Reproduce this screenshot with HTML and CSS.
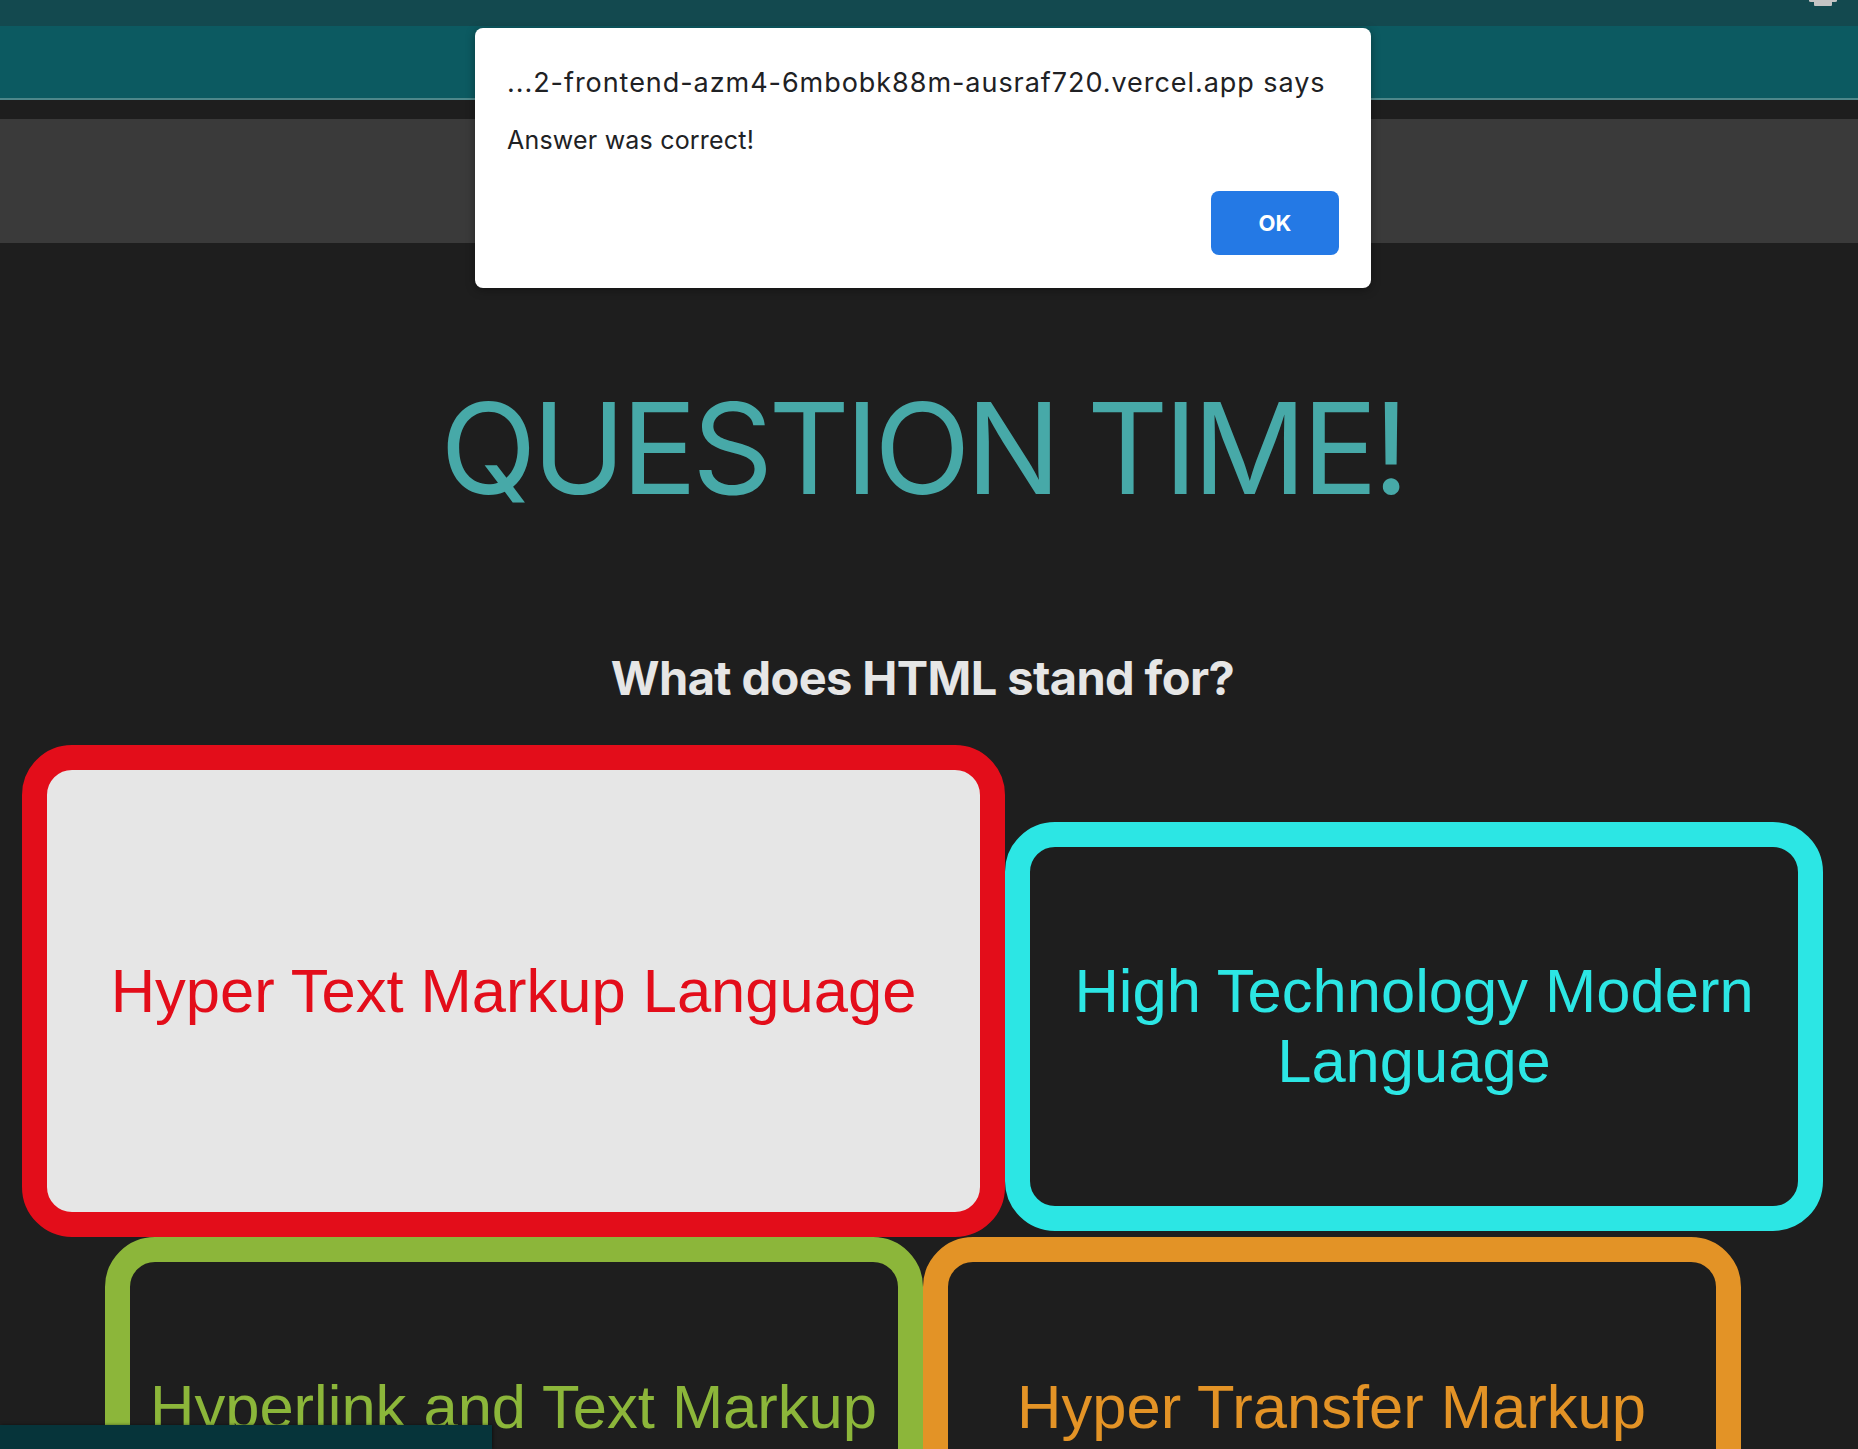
FILE: index.html
```html
<!DOCTYPE html>
<html lang="en">
<head>
<meta charset="utf-8">
<title>Question Time</title>
<link rel="stylesheet" href="styles.css">
</head>
<body>
  <div class="topbar">
    <svg class="topbar-icon" width="28" height="6" viewBox="0 0 28 6" aria-hidden="true">
      <path d="M0 0 H28 V1 Q28 2 26 2 H23 V5 Q23 6 22 6 H6 Q5 6 5 5 V2 H2 Q0 2 0 1 Z" fill="#c4c4c4"/>
    </svg>
  </div>
  <header class="nav"></header>
  <div class="subbar"></div>

  <main class="quiz">
    <h1 class="quiz-title">QUESTION TIME!</h1>
    <h2 class="quiz-question">What does HTML stand for?</h2>
    <div class="answers">
      <div class="answer answer-red is-selected">Hyper Text Markup Language</div>
      <div class="answer answer-cyan">High Technology Modern Language</div>
      <div class="answer answer-green">Hyperlink and Text Markup Language</div>
      <div class="answer answer-orange">Hyper Transfer Markup Language</div>
    </div>
  </main>

  <div class="dock"></div>

  <div class="alert" role="alertdialog">
    <div class="alert-title">...2-frontend-azm4-6mbobk88m-ausraf720.vercel.app says</div>
    <div class="alert-message">Answer was correct!</div>
    <div class="alert-actions">
      <button class="alert-ok">OK</button>
    </div>
  </div>
</body>
</html>
```

FILE: styles.css
```css
* { box-sizing: border-box; }

html, body {
  margin: 0;
  padding: 0;
}

body {
  background: #1e1e1e;
  font-family: "Liberation Sans", Arial, sans-serif;
  position: relative;
  min-height: 1449px;
  overflow: hidden;
}

.topbar {
  height: 26px;
  background: #13494f;
  position: relative;
}

.topbar-icon {
  position: absolute;
  left: 1809px;
  top: 0;
}

.nav {
  height: 74px;
  background: #0c5a61;
  border-bottom: 2px solid #4e878a;
}

.subbar {
  margin-top: 19px;
  height: 124px;
  background: #3a3a3a;
}

.quiz {
  padding-right: 13px;
  text-align: center;
}

.quiz-title {
  margin: 130px 0 0;
  font-family: Inter, "Liberation Sans", sans-serif;
  font-weight: 400;
  font-size: 126px;
  line-height: 151px;
  letter-spacing: -0.037em;
  color: #47a9a8;
}

.quiz-question {
  margin: 126px 0 0;
  font-family: Inter, "Liberation Sans", sans-serif;
  font-weight: 700;
  font-size: 47px;
  line-height: 56px;
  letter-spacing: -0.013em;
  color: #e6e6e6;
}

.answers {
  margin-top: 39px;
  display: flex;
  flex-wrap: wrap;
  justify-content: center;
  align-items: baseline;
}

.answer {
  width: 818px;
  height: 409px;
  border: 25px solid;
  border-radius: 50px;
  display: flex;
  align-items: center;
  justify-content: center;
  text-align: center;
  font-family: "Liberation Sans", Arial, sans-serif;
  font-size: 61.5px;
  line-height: 70px;
  background: #1e1e1e;
}

.answer.is-selected {
  width: 983px;
  height: 492px;
  background: #e6e6e6;
}

.answer-red { color: #e30d1a; border-color: #e30d1a; }
.answer-cyan { color: #2ce6e4; border-color: #2ce6e4; }
.answer-green { color: #8cb63a; border-color: #8cb63a; }
.answer-orange { color: #e39326; border-color: #e39326; }

.dock {
  position: absolute;
  left: 0;
  top: 1425px;
  width: 492px;
  height: 24px;
  background: #06343a;
  box-shadow: 1px 0 3px rgba(0, 0, 0, 0.5);
}

.alert {
  position: absolute;
  left: 475px;
  top: 28px;
  width: 896px;
  height: 260px;
  background: #ffffff;
  border-radius: 8px;
  box-shadow: 0 2px 10px rgba(0, 0, 0, 0.35);
  padding: 40px 32px 32px 32px;
  font-family: Inter, "Liberation Sans", sans-serif;
  color: #202124;
}

.alert-title {
  font-size: 27px;
  line-height: 30px;
  letter-spacing: 0.95px;
  white-space: nowrap;
}

.alert-message {
  margin-top: 28px;
  font-size: 25px;
  line-height: 29px;
  letter-spacing: 0.2px;
}

.alert-actions {
  margin-top: 36px;
  display: flex;
  justify-content: flex-end;
}

.alert-ok {
  width: 128px;
  height: 64px;
  border: 0;
  border-radius: 8px;
  background: #2479e5;
  color: #ffffff;
  font-family: Inter, "Liberation Sans", sans-serif;
  font-weight: 700;
  font-size: 22px;
  padding: 0;
}
```
